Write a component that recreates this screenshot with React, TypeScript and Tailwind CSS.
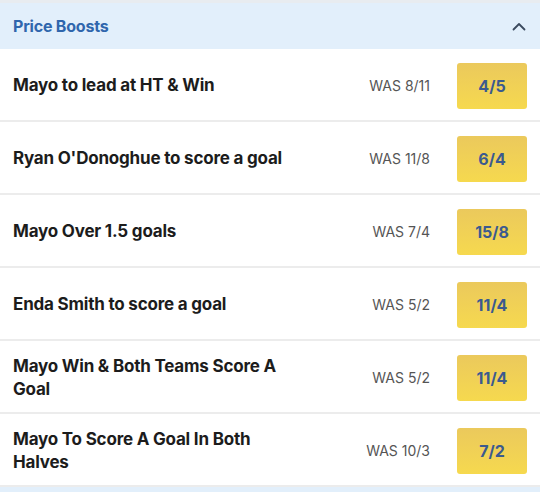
const boosts = [
  { name: "Mayo to lead at HT & Win", was: "8/11", odds: "4/5" },
  { name: "Ryan O'Donoghue to score a goal", was: "11/8", odds: "6/4" },
  { name: "Mayo Over 1.5 goals", was: "7/4", odds: "15/8" },
  { name: "Enda Smith to score a goal", was: "5/2", odds: "11/4" },
  { name: "Mayo Win & Both Teams Score A Goal", was: "5/2", odds: "11/4" },
  { name: "Mayo To Score A Goal In Both Halves", was: "10/3", odds: "7/2" },
];

export default function App() {
  return (
    <div className="w-[540px] h-[492px] bg-white overflow-hidden font-['Inter',sans-serif]">
      <div className="border-t-[3px] border-[#e8ecf0] bg-[#e2effb] h-[49px] flex items-center justify-between pl-[13px] pr-[14px]">
        <h2 className="text-[16px] font-bold text-[#2f66ad] tracking-[-0.2px]">Price Boosts</h2>
        <svg width="14" height="9" viewBox="0 0 14 9" fill="none">
          <path d="M1.5 7.5L7 2L12.5 7.5" stroke="#3b4a5e" strokeWidth="1.8" strokeLinecap="round" strokeLinejoin="round" />
        </svg>
      </div>

      <div>
        {boosts.map((b) => (
          <div
            key={b.name}
            className="h-[73px] border-b-2 border-[#ececec] flex items-center pl-[13px] pr-[13px] pt-[2px]"
          >
            <div className="w-[290px] text-[17px] leading-[23px] font-bold tracking-[-0.2px] text-[#1c1c1c]">
              {b.name}
            </div>
            <div className="flex-1 text-right text-[14px] text-[#555] pr-[27px]">
              WAS {b.was}
            </div>
            <div className="w-[70px] h-[46px] rounded-[3px] bg-gradient-to-b from-[#ebc95c] to-[#f6d94e] flex items-center justify-center text-[16px] font-bold text-[#3b5a8f]">
              {b.odds}
            </div>
          </div>
        ))}
      </div>

      <div className="h-[6px] bg-[#e2effb]" />
    </div>
  );
}
